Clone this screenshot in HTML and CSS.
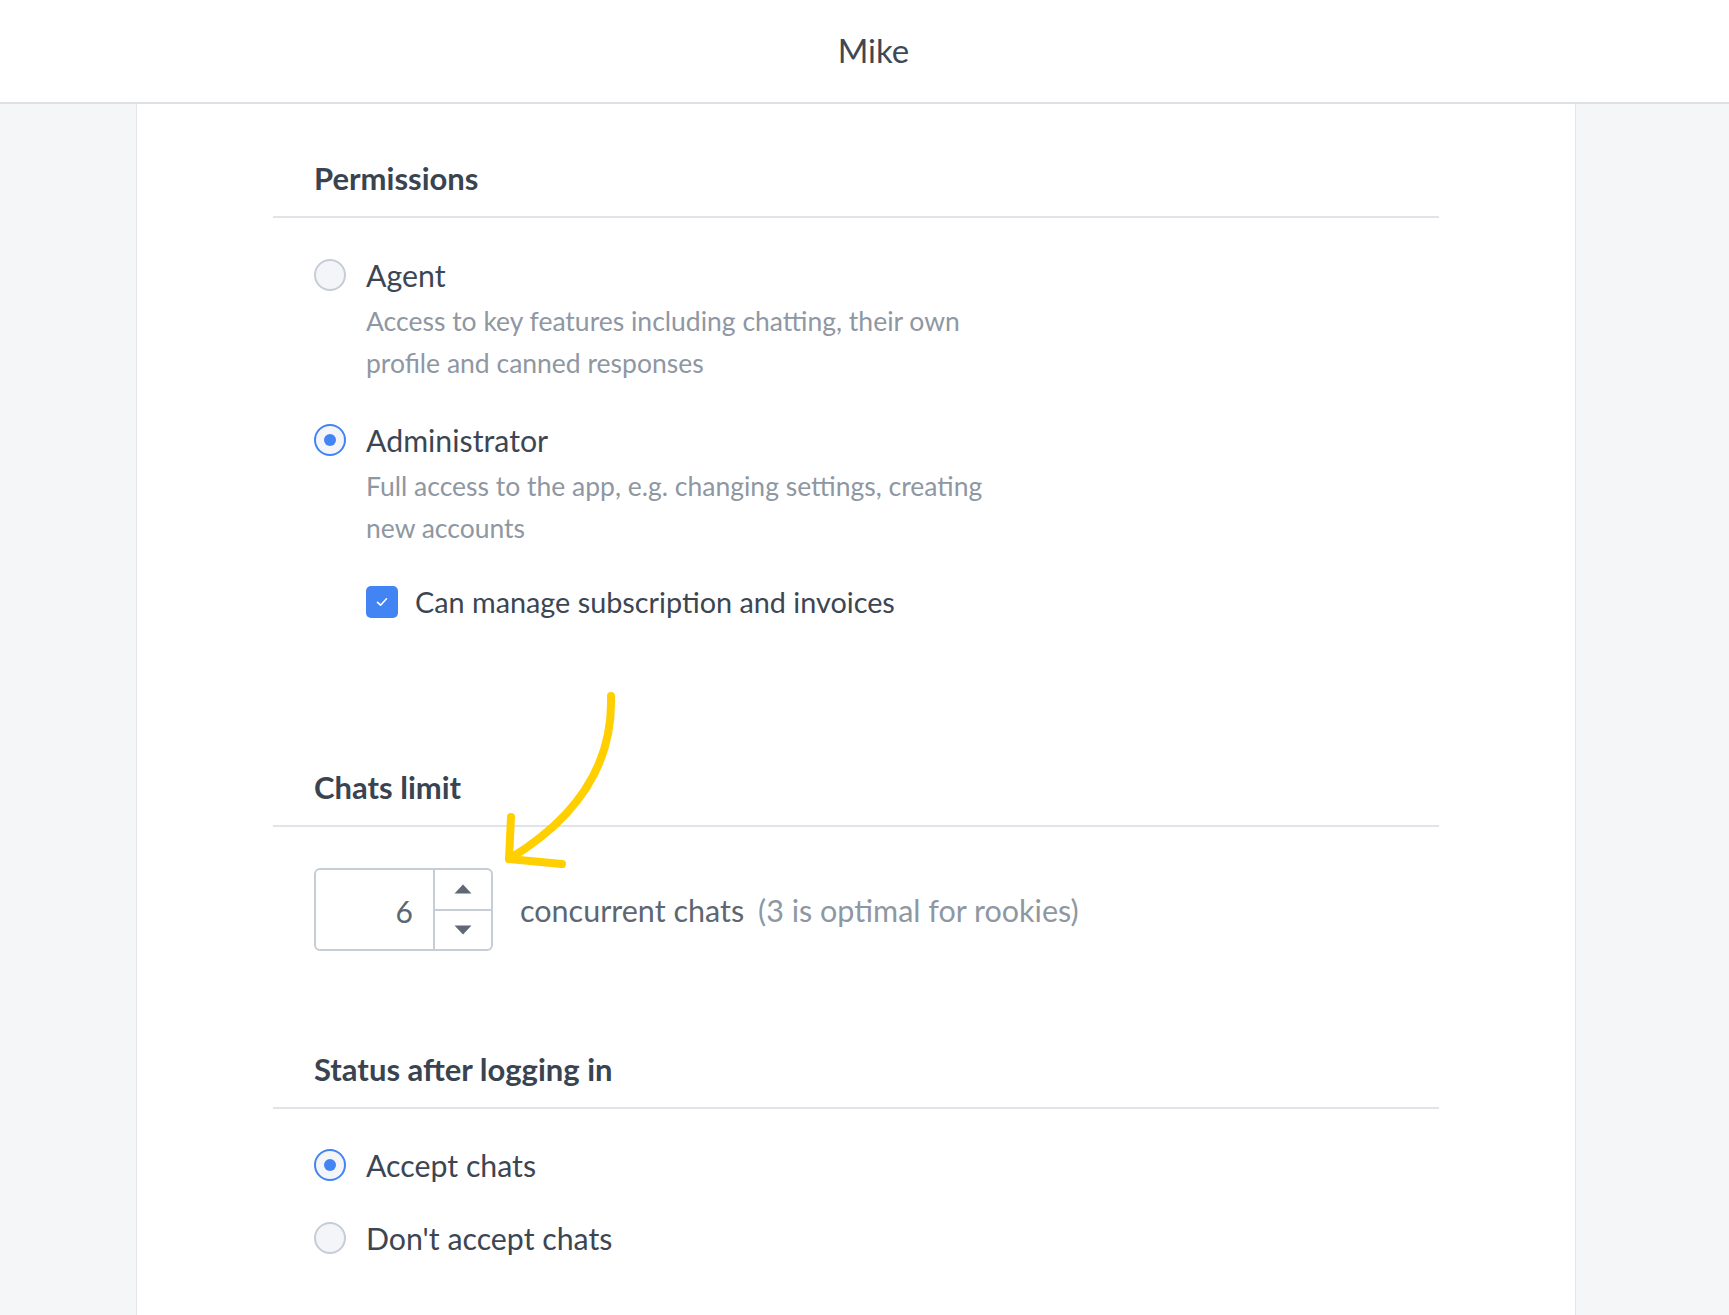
FILE: index.html
```html
<!DOCTYPE html>
<html>
<head>
<meta charset="utf-8">
<link rel="stylesheet" href="styles.css">
</head>
<body>
<header class="topbar"><h1 class="title">Mike</h1></header>
<main class="page">
  <div class="card">
    <section class="section">
      <h2 class="section-title">Permissions</h2>
      <div class="options">
        <div class="option">
          <div class="option-row"><span class="radio"></span><span class="option-label">Agent</span></div>
          <p class="option-desc">Access to key features including chatting, their own<br>profile and canned responses</p>
        </div>
        <div class="option option-admin">
          <div class="option-row"><span class="radio radio-on"></span><span class="option-label">Administrator</span></div>
          <p class="option-desc">Full access to the app, e.g. changing settings, creating<br>new accounts</p>
          <div class="check-row"><span class="checkbox"><svg width="16" height="16" viewBox="0 0 16 16"><path d="M3.5 8.3 L6.6 11.2 L12.5 4.8" fill="none" stroke="#fff" stroke-width="1.6" stroke-linecap="round" stroke-linejoin="round"/></svg></span><span class="check-label">Can manage subscription and invoices</span></div>
        </div>
      </div>
    </section>

    <section class="section section-limit">
      <h2 class="section-title">Chats limit</h2>
      <div class="limit-row">
        <div class="number">
          <span class="number-value">6</span>
          <div class="spinner">
            <span class="spin spin-up"><svg width="18" height="10" viewBox="0 0 18 10"><path d="M9 0.5 L17.5 9.5 L0.5 9.5 Z" fill="#5f6874"/></svg></span>
            <span class="spin"><svg width="18" height="10" viewBox="0 0 18 10"><path d="M0.5 0.5 L17.5 0.5 L9 9.5 Z" fill="#5f6874"/></svg></span>
          </div>
        </div>
        <span class="limit-text">concurrent chats</span>
        <span class="limit-hint">(3 is optimal for rookies)</span>
      </div>
      <svg class="arrow" width="130" height="190" viewBox="0 0 130 190"><path d="M111 9 C 113 72, 82 128, 9 172" fill="none" stroke="#ffcf00" stroke-width="8" stroke-linecap="round"/><path d="M11 130 L 9 172 L 62 177" fill="none" stroke="#ffcf00" stroke-width="8" stroke-linecap="round" stroke-linejoin="round"/></svg>
    </section>

    <section class="section section-status">
      <h2 class="section-title">Status after logging in</h2>
      <div class="options options-status">
        <div class="option-row"><span class="radio radio-on"></span><span class="option-label">Accept chats</span></div>
        <div class="option-row option-second"><span class="radio"></span><span class="option-label">Don't accept chats</span></div>
      </div>
    </section>
  </div>
</main>
</body>
</html>
```
FILE: styles.css
```css
* { box-sizing: border-box; }
html, body { margin: 0; padding: 0; }
body {
  background: #f5f6f8;
  font-family: "Lato", "Liberation Sans", sans-serif;
  color: #3c4653;
  height: 1315px;
  overflow: hidden;
}
.topbar {
  height: 104px;
  background: #fff;
  border-bottom: 2px solid #dde1e6;
  display: flex;
  align-items: center;
  justify-content: center;
  padding-left: 18px;
}
.title {
  margin: 0;
  font-size: 33px;
  font-weight: 400;
  color: #3e4854;
  line-height: 36px;
  padding-bottom: 2px;
}
.page {
  padding-left: 136px;
}
.card {
  position: relative;
  width: 1440px;
  height: 1211px;
  background: #fff;
  border-left: 1px solid #e3e6ea;
  border-right: 1px solid #e3e6ea;
  padding: 56px 136px 0;
}
.section-title {
  margin: 0;
  padding: 0 0 20px 41px;
  border-bottom: 2px solid #e0e4e8;
  font-size: 31px;
  line-height: 36px;
  font-weight: 700;
  color: #3a4451;
}
.options {
  padding: 39px 0 0 41px;
}
.options-status {
  padding-top: 38px;
}
.option-row {
  display: flex;
  align-items: center;
  height: 36px;
  gap: 20px;
}
.option-label {
  font-size: 30.3px;
  line-height: 34px;
  color: #3c4653;
}
.radio {
  width: 32px;
  height: 32px;
  border-radius: 50%;
  border: 2px solid #c6cdd6;
  background: #f3f5f8;
  flex: none;
  display: flex;
  align-items: center;
  justify-content: center;
}
.radio-on {
  border-color: #4384f5;
}
.radio-on::after {
  content: "";
  width: 12px;
  height: 12px;
  border-radius: 50%;
  background: #4384f5;
}
.option-desc {
  margin: 7px 0 0 52px;
  font-size: 26.5px;
  line-height: 42px;
  color: #8e97a2;
}
.option-admin {
  margin-top: 38px;
}
.check-row {
  display: flex;
  align-items: center;
  height: 36px;
  margin: 35px 0 0 52px;
  gap: 17px;
}
.checkbox {
  width: 32px;
  height: 32px;
  border-radius: 5px;
  background: #4384f5;
  display: flex;
  align-items: center;
  justify-content: center;
  flex: none;
}
.check-label {
  font-size: 28.8px;
  line-height: 34px;
  color: #3c4653;
}
.section-limit {
  position: relative;
  margin-top: 149px;
}
.limit-row {
  display: flex;
  align-items: center;
  margin: 41px 0 0 41px;
}
.number {
  width: 179px;
  height: 83px;
  border: 2px solid #c6cdd6;
  border-radius: 6px;
  display: flex;
}
.number-value {
  flex: 1;
  display: flex;
  align-items: center;
  justify-content: flex-end;
  padding-right: 20px;
  font-size: 30px;
  color: #5d6772;
  padding-top: 2px;
}
.spinner {
  width: 58px;
  border-left: 2px solid #c6cdd6;
  display: flex;
  flex-direction: column;
}
.spin {
  flex: 1;
  display: flex;
  align-items: center;
  justify-content: center;
}
.spin-up {
  border-bottom: 2px solid #c6cdd6;
}
.limit-text {
  margin-left: 27px;
  font-size: 30.5px;
  color: #5d6772;
}
.limit-hint {
  margin-left: 14px;
  font-size: 30.5px;
  color: #8e97a2;
}
.arrow {
  position: absolute;
  left: 227px;
  top: -82px;
}
.section-status {
  margin-top: 100px;
}
.option-second {
  margin-top: 37px;
}
```
